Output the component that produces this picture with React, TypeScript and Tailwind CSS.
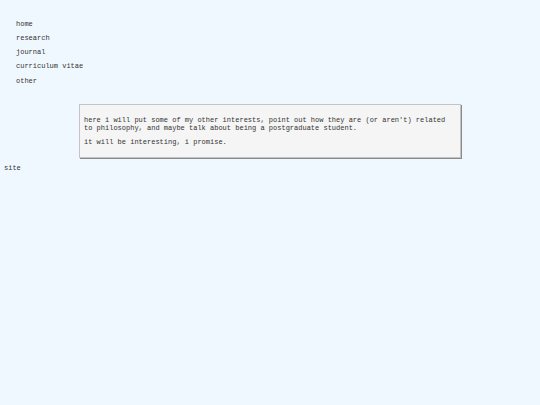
import React from 'react';

const links = ['home', 'research', 'journal', 'curriculum vitae', 'other'];

const App: React.FC = () => {
  return (
    <div className="min-h-[405px] w-[540px] bg-[#f0f8ff] text-[7px] leading-[8px] text-[#333] font-['Liberation_Mono',monospace]">
      {/* Navigation */}
      <nav className="flex flex-col gap-[6.3px] pl-4 pt-[19.6px]">
        {links.map((l) => (
          <span key={l} className="block">{l}</span>
        ))}
      </nav>

      {/* Content box */}
      <div className="ml-[79px] mt-[19px] w-[382px] border border-[#c4c4c4] bg-[#f5f5f5] px-[4px] pt-[11px] pb-[11px] shadow-[1px_1px_0_#8a8a8a]">
        <p>
          here i will put some of my other interests, point out how they are (or aren't) related
          to philosophy, and maybe talk about being a postgraduate student.
        </p>
        <p className="mt-[6px]">it will be interesting, i promise.</p>
      </div>

      <div className="pl-[4px] pt-[6px]">site</div>
    </div>
  );
};

export default App;
